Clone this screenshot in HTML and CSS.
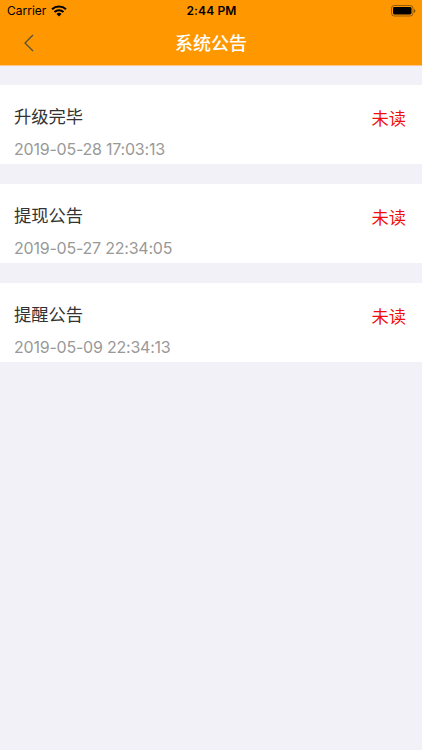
FILE: index.html
```
<!DOCTYPE html>
<html lang="zh-CN">
<head>
  <meta charset="UTF-8" />
  <title>系统公告</title>
  <link rel="stylesheet" href="styles.css">
</head>
<body>

<header class="header">
  <div class="status">
    <div class="carrier">
      <span>Carrier</span>
      <svg class="wifi" width="16" height="12" viewBox="0 0 16 12">
        <path d="M1 4.3a10.2 10.2 0 0 1 14 0M3.5 7a6.5 6.5 0 0 1 9 0" fill="none" stroke="#000" stroke-width="2.1" />
        <path d="M5.5 9a3.6 3.6 0 0 1 5 0L8 11.5z" />
      </svg>
    </div>
    <div class="time">2:44 PM</div>
    <svg class="battery" width="25" height="12" viewBox="0 0 25 12">
      <rect x="0.5" y="0.5" width="21.5" height="10.5" rx="2.8" fill="none" stroke="#000" stroke-opacity="0.4" />
      <rect x="2" y="2" width="18.5" height="7.5" rx="1.4" />
      <path d="M23 4v3.8a2 2 0 0 0 0-3.8z" fill-opacity="0.5" />
    </svg>
  </div>
  <nav class="nav">
    <svg class="back" width="10" height="18" viewBox="0 0 10 18">
      <path d="M9 1L1 9l8 8" fill="none" stroke="#54513f" stroke-width="1.3" />
    </svg>
    <h1 class="title">系统公告</h1>
  </nav>
</header>

<ul class="list">
  <li class="item">
    <div>
      <h2 class="name">升级完毕</h2>
      <p class="date">2019-05-28 17:03:13</p>
    </div>
    <span class="unread">未读</span>
  </li>
  <li class="item">
    <div>
      <h2 class="name">提现公告</h2>
      <p class="date">2019-05-27 22:34:05</p>
    </div>
    <span class="unread">未读</span>
  </li>
  <li class="item">
    <div>
      <h2 class="name">提醒公告</h2>
      <p class="date">2019-05-09 22:34:13</p>
    </div>
    <span class="unread">未读</span>
  </li>
</ul>

</body>
</html>
```
FILE: styles.css
```
* { box-sizing: border-box; margin: 0; padding: 0; }
body { font-family: Inter, "Noto Sans CJK SC", sans-serif; background: #f2f1f7; min-height: 100vh; }
.header { height: 66px; background: #ff9800; border-bottom: 1px solid #fbc687; }
.status {
  display: grid;
  grid-template-columns: 1fr auto 1fr;
  align-items: center;
  height: 21px;
  padding: 0 6px 0 7px;
  font-size: 12px;
}
.carrier { display: flex; align-items: center; gap: 5px; }
.time { font-weight: 600; letter-spacing: 0.15px; }
.battery { justify-self: end; }
.nav {
  display: grid;
  grid-template-columns: 1fr auto 1fr;
  align-items: center;
  height: 44px;
  padding: 0 24px;
}
.title { padding-top: 2px; color: #fff; font-size: 18px; line-height: 26px; font-weight: 500; }
.list { list-style: none; padding-top: 19px; }
.item {
  display: flex;
  justify-content: space-between;
  height: 79px;
  margin-bottom: 19.8px;
  padding: 19px 16px 0 14px;
  background: #fff;
}
.name { color: #333; font-size: 17.3px; line-height: 26px; font-weight: 400; }
.date { margin-top: 9px; color: #999; font-size: 16px; line-height: 20px; letter-spacing: -0.22px; }
.unread { padding-top: 2px; color: #f00f0f; font-size: 17.3px; line-height: 26px; }
```
